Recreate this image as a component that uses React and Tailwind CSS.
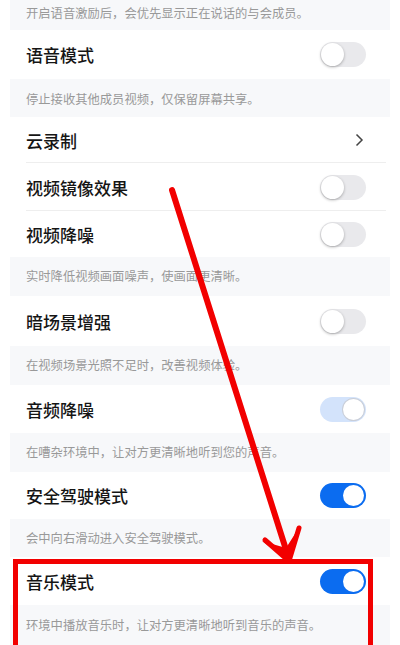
import React from "react";

const font = { fontFamily: '"Noto Sans CJK SC", "Noto Sans", sans-serif' };

function Toggle({ state }) {
  // state: "off" | "on" | "dim"
  if (state === "off") {
    return (
      <div className="w-[46px] h-[25px] rounded-full bg-[#e9e9ec] flex items-center p-[1px]">
        <div className="w-[23px] h-[23px] rounded-full bg-white shadow-[0_1px_3px_rgba(0,0,0,0.3)]" />
      </div>
    );
  }
  return (
    <div
      className={
        "w-[46px] h-[25px] rounded-full flex items-center justify-end p-[2px] " +
        (state === "on" ? "bg-[#0b6cf0]" : "bg-[#d3e3fb]")
      }
    >
      <div
        className={
          "w-[21px] h-[21px] rounded-full bg-white " +
          (state === "dim" ? "shadow-[0_0_0_1px_#c9ced8]" : "")
        }
      />
    </div>
  );
}

function Row({ title, h, toggle, chevron, divider }) {
  return (
    <div className={"relative flex items-center justify-between pl-[26px] pr-[34px] bg-white " + h}>
      <span className="text-[17px] font-medium text-[#151515] leading-none">{title}</span>
      {toggle && <Toggle state={toggle} />}
      {chevron && (
        <svg width="9" height="14" viewBox="0 0 9 14" className="mr-[2px]">
          <path d="M1.5 1.5 L7 7 L1.5 12.5" fill="none" stroke="#444" strokeWidth="1.5" />
        </svg>
      )}
      {divider && <div className="absolute bottom-0 left-[26px] right-[14px] h-px bg-[#eeeeee]" />}
    </div>
  );
}

function Desc({ text, h, extra = "" }) {
  return (
    <div className={"mx-[10px] bg-[#f7f8fa] flex items-center pl-[16px] " + h + " " + extra}>
      <span className="text-[12.3px] text-[#999999] leading-none">{text}</span>
    </div>
  );
}

export default function App() {
  return (
    <div className="relative w-[400px] h-[645px] overflow-hidden bg-white" style={font}>
      <div className="flex flex-col">
        <Desc text="开启语音激励后，会优先显示正在说话的与会成员。" h="h-[30px]" extra="pb-[4px]" />
        <Row title="语音模式" h="h-[49px]" toggle="off" />
        <Desc text="停止接收其他成员视频，仅保留屏幕共享。" h="h-[38px]" extra="pt-[3px]" />
        <Row title="云录制" h="h-[46px]" chevron divider />
        <Row title="视频镜像效果" h="h-[48px]" toggle="off" divider />
        <Row title="视频降噪" h="h-[46px]" toggle="off" />
        <Desc text="实时降低视频画面噪声，使画面更清晰。" h="h-[39px]" />
        <Row title="暗场景增强" h="h-[50px]" toggle="off" />
        <Desc text="在视频场景光照不足时，改善视频体验。" h="h-[39px]" />
        <Row title="音频降噪" h="h-[48px]" toggle="dim" />
        <Desc text="在嘈杂环境中，让对方更清晰地听到您的声音。" h="h-[39px]" />
        <Row title="安全驾驶模式" h="h-[47px]" toggle="on" />
        <Desc text="会中向右滑动进入安全驾驶模式。" h="h-[38px]" />
        <Row title="音乐模式" h="h-[48px]" toggle="on" />
        <Desc text="环境中播放音乐时，让对方更清晰地听到音乐的声音。" h="h-[40px]" />
      </div>

      {/* red highlight box */}
      <div className="absolute left-[13px] top-[559px] w-[360px] h-[100px] border-[5px] border-[#f20000]" />

      {/* red arrow */}
      <svg className="absolute inset-0 pointer-events-none" width="400" height="645" viewBox="0 0 400 645">
        <line x1="172" y1="190" x2="288" y2="556" stroke="#f20000" strokeWidth="6" strokeLinecap="round" />
        <path d="M289 561 L262 541 L286 548 L300 526 Z" fill="#f20000" />
        <path d="M289 561 L265 540 M289 561 L299 528" stroke="#f20000" strokeWidth="5" strokeLinecap="round" fill="none" />
      </svg>
    </div>
  );
}
